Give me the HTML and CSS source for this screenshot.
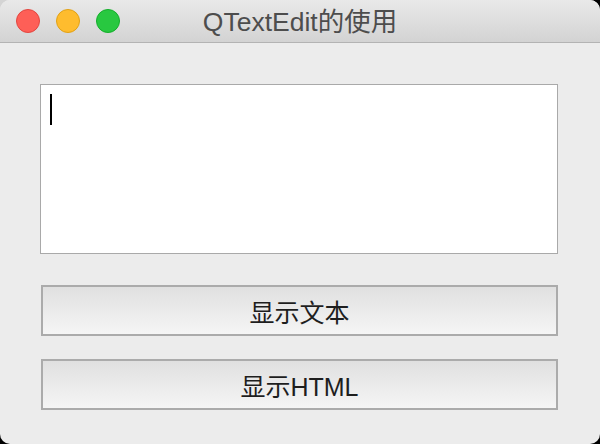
FILE: index.html
```html
<!DOCTYPE html>
<html lang="zh">
<head>
<meta charset="utf-8">
<link rel="stylesheet" href="styles.css">
</head>
<body>
<div class="window">
  <div class="titlebar">
    <div class="lights">
      <span class="light red"></span>
      <span class="light yellow"></span>
      <span class="light green"></span>
    </div>
    <div class="title">QTextEdit的使用</div>
  </div>
  <div class="content">
    <div class="editor"><span class="caret"></span></div>
    <button class="btn btn-first">显示文本</button>
    <button class="btn btn-second">显示HTML</button>
  </div>
</div>
</body>
</html>
```
FILE: styles.css
```css
html, body {
  margin: 0;
  padding: 0;
  width: 600px;
  height: 444px;
  overflow: hidden;
}
body {
  background: linear-gradient(135deg, #d4d4d4 14px, #000 14px);
  font-family: "Liberation Sans", "Noto Sans CJK SC", sans-serif;
}
.window {
  width: 600px;
  height: 444px;
  background: #ececec;
  border-radius: 10px;
  overflow: hidden;
  display: flex;
  flex-direction: column;
}
.titlebar {
  height: 42px;
  flex: none;
  border-bottom: 1px solid #b3b3b3;
  background: linear-gradient(#e9e9e9, #d3d3d3);
  position: relative;
  display: flex;
  align-items: center;
  justify-content: center;
}
.lights {
  position: absolute;
  left: 16px;
  top: 9px;
  display: flex;
  gap: 16px;
}
.light {
  width: 24px;
  height: 24px;
  border-radius: 50%;
  box-sizing: border-box;
}
.red { background: #fe5f57; border: 1px solid #e2463f; }
.yellow { background: #febc2e; border: 1px solid #e1a116; }
.green { background: #28c840; border: 1px solid #14ae2b; }
.title {
  font-size: 26.5px;
  color: #4d4d4d;
  line-height: 42px;
  margin-top: 1px;
}
.content {
  display: flex;
  flex-direction: column;
  padding: 41px 42px 0 40px;
}
.editor {
  width: 518px;
  height: 170px;
  box-sizing: border-box;
  background: #fff;
  border: 1px solid #a9a9a9;
  padding: 9px 0 0 9px;
}
.caret {
  display: block;
  width: 2px;
  height: 31px;
  background: #000;
}
.btn {
  margin-left: 1px;
  width: 517px;
  height: 51px;
  box-sizing: border-box;
  border: 2px solid #ababab;
  border-radius: 0;
  background: linear-gradient(#e0e0e0, #f5f5f5);
  font-family: "Liberation Sans", "Noto Sans CJK SC", sans-serif;
  font-size: 25px;
  color: #1e1e1e;
  padding: 0;
}
.btn-first { margin-top: 31px; }
.btn-second { margin-top: 23px; }
```
